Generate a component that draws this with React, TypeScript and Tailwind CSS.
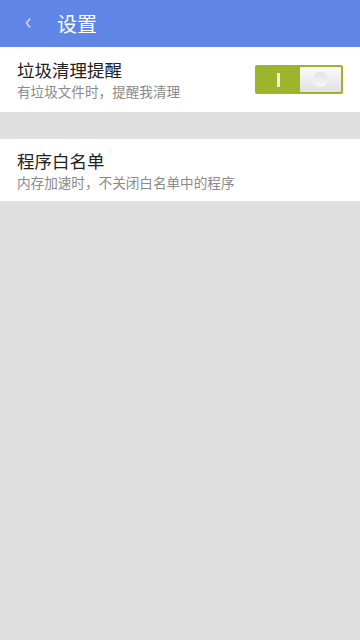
import React, { useState } from 'react';

const font = { fontFamily: '"Noto Sans CJK SC", "Noto Sans", sans-serif' };

function Toggle({ on, onToggle }: { on: boolean; onToggle: () => void }) {
  return (
    <button
      onClick={onToggle}
      className={`flex h-[29px] w-[88px] items-center rounded-[2px] p-[2px] ${on ? 'bg-[#9cb52c]' : 'bg-[#bdbdbd]'}`}
    >
      {on ? (
        <>
          <div className="flex flex-1 items-center justify-center">
            <div className="h-[14px] w-[3px] bg-[#f3f3d8]" />
          </div>
          <div className="flex h-[25px] w-[41px] items-center justify-center rounded-[1px] bg-gradient-to-b from-[#fafafa] to-[#e2e2e2]">
            <div className="h-[15px] w-[15px] rounded-full bg-gradient-to-b from-[#e2e2e2] to-[#f8f8f8]" />
          </div>
        </>
      ) : (
        <>
          <div className="flex h-[25px] w-[41px] items-center justify-center rounded-[1px] bg-gradient-to-b from-[#fafafa] to-[#e2e2e2]">
            <div className="h-[15px] w-[15px] rounded-full bg-gradient-to-b from-[#e2e2e2] to-[#f8f8f8]" />
          </div>
          <div className="flex-1" />
        </>
      )}
    </button>
  );
}

export default function App() {
  const [remind, setRemind] = useState(true);

  return (
    <div className="flex h-[640px] w-[360px] flex-col bg-[#dfdfdf]" style={font}>
      {/* Header */}
      <div className="flex h-[47px] items-center bg-[#5f86e6] pl-[24px]">
        <svg width="8" height="16" viewBox="0 0 8 16" className="mb-[2px]">
          <path d="M6 3.5 L2.5 8 L6 12.5" fill="none" stroke="#c9d6f7" strokeWidth="1.6" />
        </svg>
        <span className="ml-[25px] text-[20px] leading-none text-white">设置</span>
      </div>

      {/* Junk clean reminder */}
      <div className="flex h-[65px] items-center justify-between bg-white pl-[17px] pr-[17px]">
        <div className="flex flex-col">
          <span className="text-[17.5px] leading-[22px] text-[#222]">垃圾清理提醒</span>
          <span className="mt-[2px] text-[13.6px] leading-[17px] text-[#8a8a8a]">有垃圾文件时，提醒我清理</span>
        </div>
        <Toggle on={remind} onToggle={() => setRemind(!remind)} />
      </div>

      <div className="h-[27px]" />

      {/* Whitelist */}
      <div className="flex h-[62px] flex-col justify-center bg-white pl-[17px]">
        <span className="text-[17.5px] leading-[22px] text-[#222]">程序白名单</span>
        <span className="mt-[2px] text-[13.6px] leading-[17px] text-[#8a8a8a]">内存加速时，不关闭白名单中的程序</span>
      </div>
    </div>
  );
}
